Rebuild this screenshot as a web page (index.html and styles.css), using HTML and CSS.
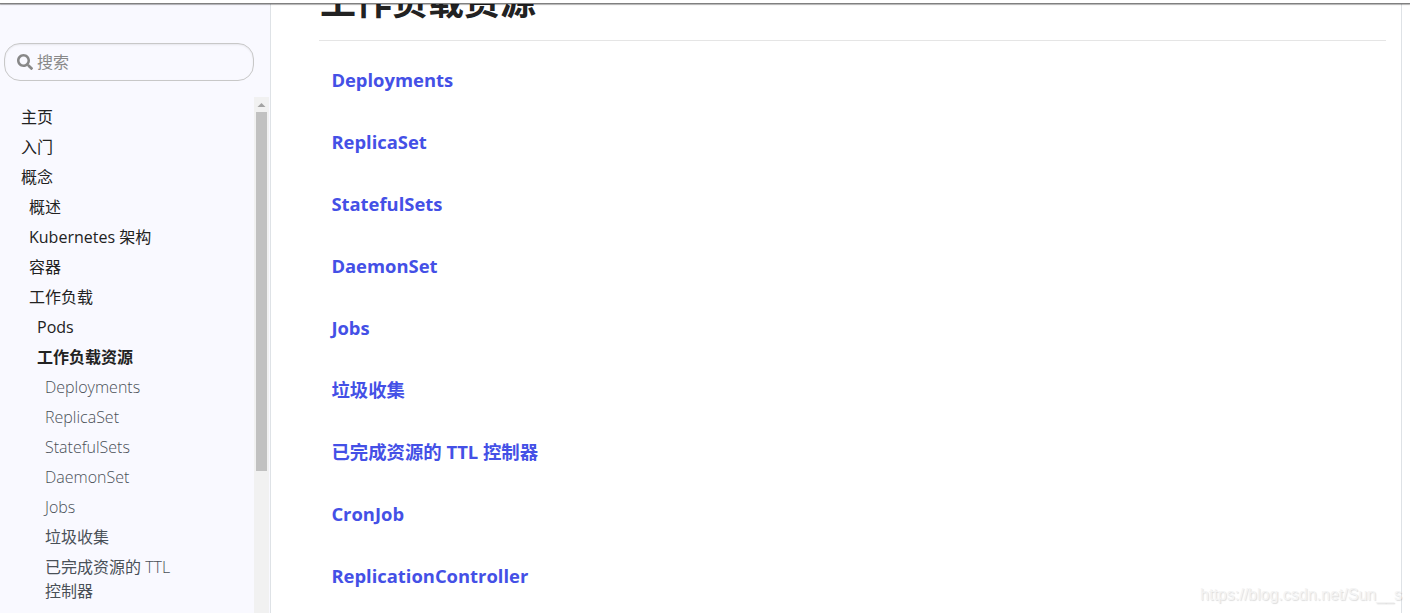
FILE: index.html
```html
<!DOCTYPE html>
<html lang="zh-CN">
<head>
  <meta charset="UTF-8">
  <meta name="viewport" content="width=device-width, initial-scale=1.0">
  <title>工作负载资源</title>
  <link rel="stylesheet" href="styles.css">
</head>
<body>
  <header class="topbar"></header>

  <div class="layout">
    <aside class="sidebar">
      <div class="search">
        <svg class="search-icon" viewBox="0 0 512 512">
          <path d="M505 442.700L405.300 343c-4.500-4.500-10.600-7-17-7H372c27.600-35.300 44-79.700 44-128C416 93.100 322.900 0 208 0S0 93.100 0 208s93.100 208 208 208c48.300 0 92.700-16.400 128-44v16.300c0 6.400 2.500 12.500 7 17l99.700 99.700c9.400 9.400 24.600 9.400 33.900 0l28.300-28.300c9.400-9.400 9.400-24.600.1-34zM208 336c-70.700 0-128-57.200-128-128 0-70.700 57.200-128 128-128 70.700 0 128 57.200 128 128 0 70.700-57.200 128-128 128z"/>
        </svg>
        <span>搜索</span>
      </div>

      <div class="sidebar-body">
        <nav class="nav">
          <a class="nav-link">主页</a>
          <a class="nav-link">入门</a>
          <a class="nav-link">概念</a>
          <a class="nav-link level-2">概述</a>
          <a class="nav-link level-2">Kubernetes 架构</a>
          <a class="nav-link level-2">容器</a>
          <a class="nav-link level-2">工作负载</a>
          <a class="nav-link level-3">Pods</a>
          <a class="nav-link level-3 active">工作负载资源</a>
          <a class="nav-link level-4">Deployments</a>
          <a class="nav-link level-4">ReplicaSet</a>
          <a class="nav-link level-4">StatefulSets</a>
          <a class="nav-link level-4">DaemonSet</a>
          <a class="nav-link level-4">Jobs</a>
          <a class="nav-link level-4 cjk">垃圾收集</a>
          <a class="nav-link level-4 cjk">已完成资源的 <span class="latin">TTL</span> 控制器</a>
        </nav>
        <div class="scrollbar">
          <svg class="scroll-up" viewBox="0 0 15 15">
            <path d="M3.500 10L7.500 6L11.500 10z"/>
          </svg>
          <div class="scroll-thumb"></div>
        </div>
      </div>
    </aside>

    <main class="content">
      <h1>工作负载资源</h1>
      <div class="entries">
        <h5><a>Deployments</a></h5>
        <h5><a>ReplicaSet</a></h5>
        <h5><a>StatefulSets</a></h5>
        <h5><a>DaemonSet</a></h5>
        <h5><a>Jobs</a></h5>
        <h5><a>垃圾收集</a></h5>
        <h5><a>已完成资源的 TTL 控制器</a></h5>
        <h5><a>CronJob</a></h5>
        <h5><a>ReplicationController</a></h5>
      </div>
    </main>
    <div class="toc"></div>
  </div>

  <div class="watermark">https://blog.csdn.net/Sun__s</div>
</body>
</html>
```

FILE: styles.css
```css
:root {
  --primary: #4450e6;
  --text: #222222;
  --muted: #495057;
  --border: #dee2e6;
}

* {
  margin: 0;
  padding: 0;
  box-sizing: border-box;
}

body {
  height: 100vh;
  display: flex;
  flex-direction: column;
  overflow: hidden;
  font-family: "Open Sans", "Noto Sans CJK SC", sans-serif;
  font-size: 16px;
  line-height: 24px;
  color: var(--text);
  background: #fff;
}

.topbar {
  flex: none;
  height: 4px;
  border-bottom: 1px solid #808080;
  box-shadow: 0 1px 1px rgba(0, 0, 0, 0.3);
  background: #fff;
  z-index: 1;
}

.layout {
  flex: 1;
  min-height: 0;
  display: flex;
  overflow: hidden;
}

.sidebar {
  flex: none;
  width: 271px;
  display: flex;
  flex-direction: column;
  padding-top: 39px;
  border-right: 1px solid var(--border);
  background: #f9f9ff;
}

.search {
  flex: none;
  width: 250px;
  height: 38px;
  margin-left: 4px;
  padding-left: 12px;
  display: flex;
  align-items: center;
  gap: 4px;
  border: 1px solid #c8c8c8;
  border-radius: 16px;
  box-shadow: inset 0 1px 2px rgba(0, 0, 0, 0.075);
  color: #888;
}

.search-icon {
  width: 16px;
  height: 16px;
  fill: #888;
}

.sidebar-body {
  flex: 1;
  min-height: 0;
  margin-top: 16px;
  display: flex;
  justify-content: space-between;
}

.nav {
  width: 190px;
  padding: 8px 0 0 21px;
}

.nav-link {
  display: block;
  margin-bottom: 6px;
}

.level-2 {
  padding-left: 8px;
}

.level-3 {
  padding-left: 16px;
}

.level-4 {
  padding-left: 24px;
  font-weight: 300;
  color: var(--muted);
}

.cjk {
  font-weight: 400;
}

.latin {
  font-weight: 300;
}

.active {
  font-weight: 700;
}

.scrollbar {
  width: 15px;
  margin-right: 1px;
  background: #f1f1f1;
}

.scroll-up {
  display: block;
  width: 15px;
  height: 15px;
  fill: #a3a3a3;
}

.scroll-thumb {
  width: 11px;
  height: 359px;
  margin-left: 2px;
  background: #c1c1c1;
}

.content {
  flex: 1;
  margin: -22px 15px 0 48px;
}

h1 {
  height: 59px;
  padding-left: 1px;
  font-size: 36px;
  line-height: 40px;
  border-bottom: 1px solid #e5e5e5;
}

.entries {
  padding: 28px 12.4px 0;
}

h5 {
  height: 62px;
  font-size: 18.4px;
  line-height: 22px;
  font-weight: 700;
  color: var(--primary);
}

.toc {
  width: 9px;
  border-left: 1px solid var(--border);
}

.watermark {
  position: absolute;
  right: 8px;
  bottom: 9px;
  font-family: "Liberation Sans", sans-serif;
  font-size: 16px;
  line-height: 18px;
  color: #f4f4f4;
  text-shadow: 1px 1px 1px rgba(0, 0, 0, 0.14);
}
```
